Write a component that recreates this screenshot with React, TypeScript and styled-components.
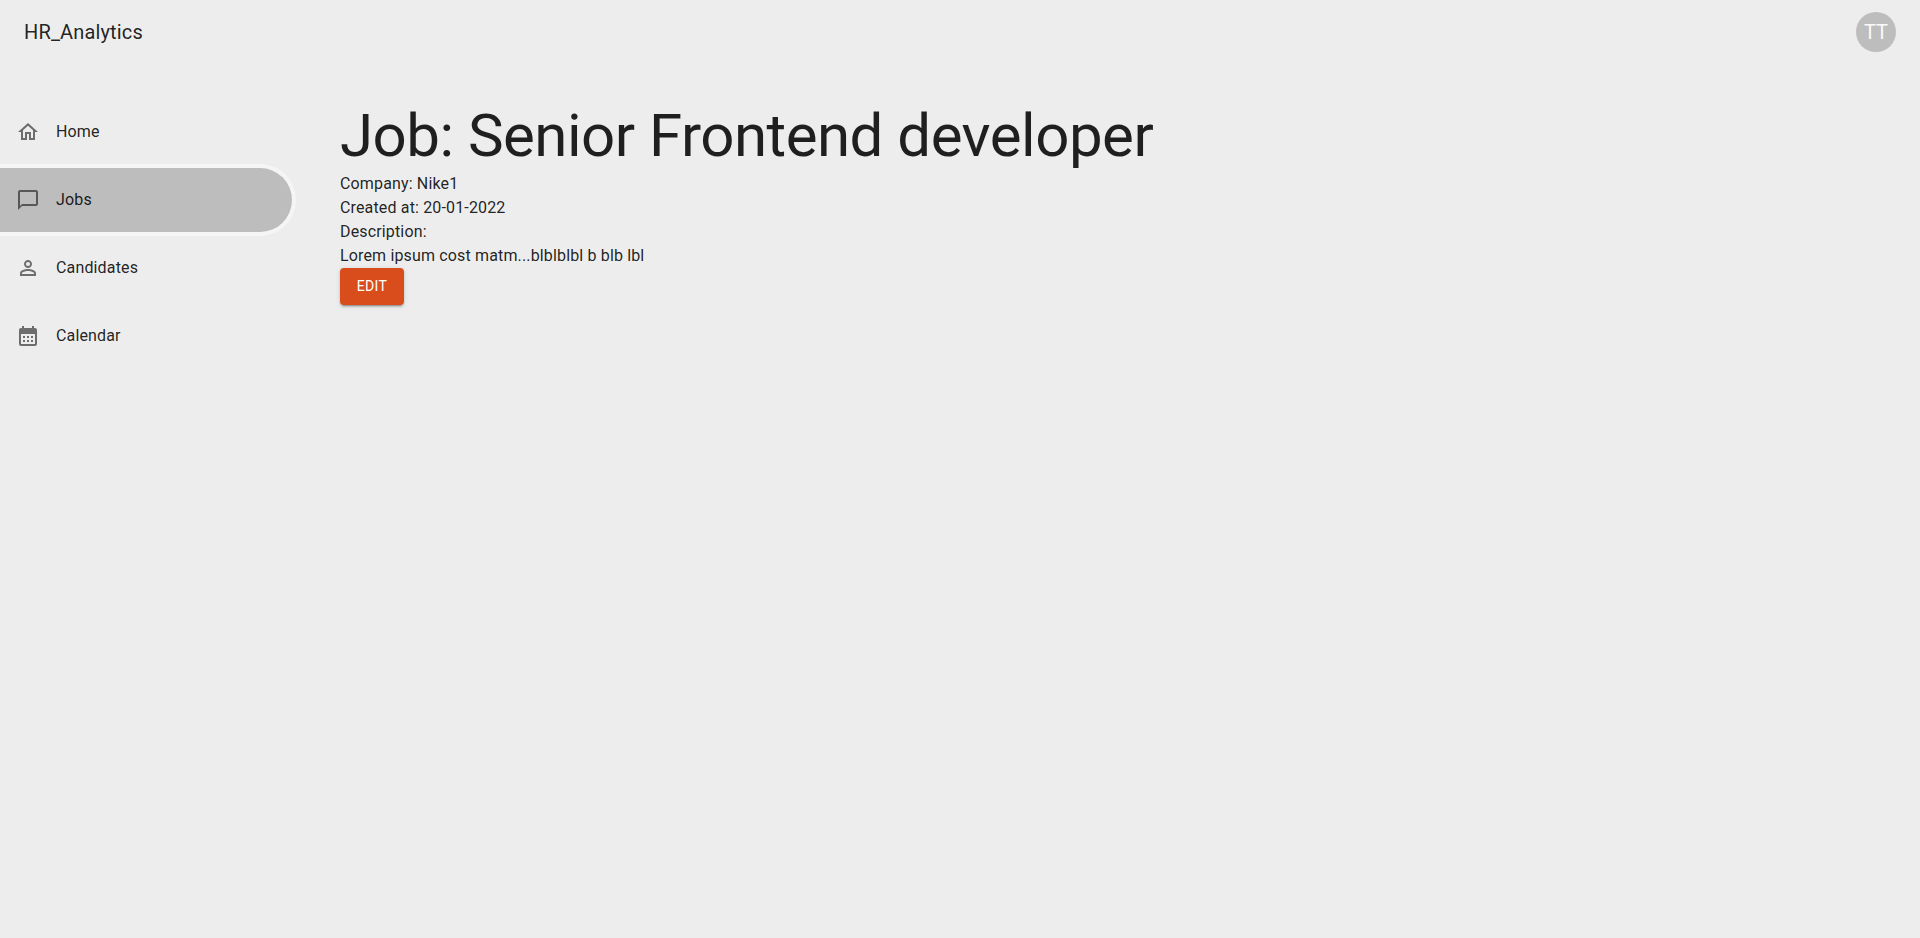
import React from "react";
import styled, { createGlobalStyle } from "styled-components";
import {
  MdOutlineHome,
  MdOutlineChatBubbleOutline,
  MdPersonOutline,
  MdCalendarMonth,
} from "react-icons/md";

const GlobalStyle = createGlobalStyle`
  *, *::before, *::after { box-sizing: border-box; }
  body {
    margin: 0;
    background: #ededed;
    color: rgba(0, 0, 0, 0.87);
    font-family: Roboto, "Liberation Sans", sans-serif;
    font-size: 16px;
    line-height: 24px;
    letter-spacing: 0.00938em;
  }
`;

const Page = styled.div`
  display: flex;
  flex-direction: column;
  min-height: 100vh;
`;

const TopBar = styled.header`
  display: flex;
  align-items: center;
  justify-content: space-between;
  height: 64px;
  padding: 0 24px;
`;

const Brand = styled.a`
  color: inherit;
  font-size: 20px;
  line-height: 32px;
  letter-spacing: 0.0075em;
  text-decoration: none;
`;

const Avatar = styled.button`
  display: flex;
  align-items: center;
  justify-content: center;
  width: 40px;
  height: 40px;
  padding: 0;
  border: 0;
  border-radius: 50%;
  background: #bdbdbd;
  color: #fafafa;
  font-family: inherit;
  font-size: 20px;
  line-height: 20px;
  cursor: pointer;
`;

const Body = styled.div`
  display: flex;
  flex: 1;
  padding-top: 36px;
`;

const Sidebar = styled.nav`
  flex: 0 0 292px;
`;

const NavList = styled.ul`
  display: flex;
  flex-direction: column;
  gap: 4px;
  margin: 0;
  padding: 0;
  list-style: none;
`;

const NavLink = styled.a<{ $active: boolean }>`
  display: flex;
  align-items: center;
  gap: 16px;
  height: 64px;
  padding: 0 16px;
  border-radius: 0 32px 32px 0;
  background: ${({ $active }) => ($active ? "#bdbdbd" : "transparent")};
  box-shadow: ${({ $active }) => ($active ? "0 0 0 4px #f5f5f5" : "none")};
  color: inherit;
  text-decoration: none;

  svg {
    width: 24px;
    height: 24px;
    color: rgba(0, 0, 0, 0.54);
  }
`;

const Main = styled.main`
  flex: 1;
  min-width: 0;
  padding: 0 48px;
`;

const Title = styled.h1`
  margin: 0;
  font-size: 60px;
  font-weight: 400;
  line-height: 72px;
  letter-spacing: -0.00833em;
`;

const Detail = styled.p`
  margin: 0;
`;

const EditButton = styled.button`
  display: block;
  min-width: 64px;
  padding: 6px 16px 7px;
  border: 0;
  border-radius: 4px;
  background: #d94c1c;
  color: #fff;
  box-shadow:
    0 3px 1px -2px rgba(0, 0, 0, 0.2),
    0 2px 2px 0 rgba(0, 0, 0, 0.14),
    0 1px 5px 0 rgba(0, 0, 0, 0.12);
  font-family: inherit;
  font-size: 14px;
  line-height: 24px;
  letter-spacing: 0.02857em;
  text-transform: uppercase;
  cursor: pointer;
`;

const navItems = [
  { label: "Home", Icon: MdOutlineHome },
  { label: "Jobs", Icon: MdOutlineChatBubbleOutline },
  { label: "Candidates", Icon: MdPersonOutline },
  { label: "Calendar", Icon: MdCalendarMonth },
];

const details = [
  "Company: Nike1",
  "Created at: 20-01-2022",
  "Description:",
  "Lorem ipsum cost matm...blblblbl b blb lbl",
];

export default function App() {
  return (
    <Page>
      <GlobalStyle />
      <TopBar>
        <Brand href="#home">HR_Analytics</Brand>
        <Avatar type="button">TT</Avatar>
      </TopBar>
      <Body>
        <Sidebar>
          <NavList>
            {navItems.map(({ label, Icon }) => (
              <li key={label}>
                <NavLink
                  href={`#${label.toLowerCase()}`}
                  $active={label === "Jobs"}
                  aria-current={label === "Jobs" ? "page" : undefined}
                >
                  <Icon aria-hidden="true" />
                  {label}
                </NavLink>
              </li>
            ))}
          </NavList>
        </Sidebar>
        <Main>
          <Title>Job: Senior Frontend developer</Title>
          {details.map((line) => (
            <Detail key={line}>{line}</Detail>
          ))}
          <EditButton type="button">Edit</EditButton>
        </Main>
      </Body>
    </Page>
  );
}
